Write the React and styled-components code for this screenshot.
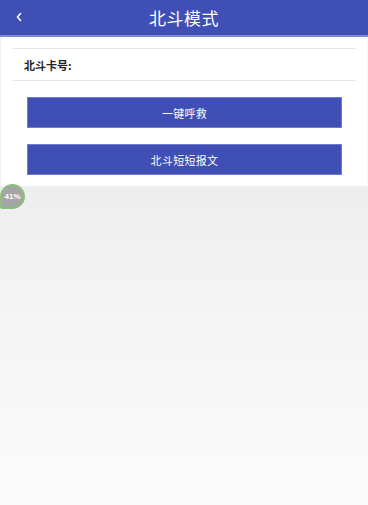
import React from "react";
import styled, { createGlobalStyle } from "styled-components";

const Global = createGlobalStyle`
  html, body { margin: 0; padding: 0; background: #ffffff; }
  body { font-family: "Noto Sans CJK SC", "Noto Sans", sans-serif; }
  * { box-sizing: border-box; }
`;

const Page = styled.div`
  width: 368px;
  height: 505px;
  display: flex;
  flex-direction: column;
  background: #ffffff;
  overflow: hidden;
`;

const Header = styled.header`
  height: 37px;
  flex-shrink: 0;
  background: #3f4fb5;
  border-bottom: 2px solid #7f8ad6;
  display: grid;
  grid-template-columns: 40px 1fr 40px;
  align-items: center;
  color: #ffffff;
`;

const Back = styled.button`
  border: none;
  background: transparent;
  color: #ffffff;
  padding: 0 0 2px 16px;
  display: flex;
  align-items: center;
  height: 100%;
`;

const Title = styled.h1`
  margin: 0;
  text-align: center;
  font-size: 17px;
  font-weight: 400;
  letter-spacing: 0.5px;
  line-height: 1;
`;

const Content = styled.main`
  padding: 11px 11px 0 12px;
  border-left: 1px solid #f0f0f0;
  border-right: 1px solid #f6f6f6;
`;

const InfoRow = styled.div`
  height: 33px;
  border-top: 1px solid #e6e6e6;
  border-bottom: 1px solid #e6e6e6;
  display: flex;
  align-items: center;
  padding-left: 11px;
  font-size: 11px;
  font-weight: 700;
  color: #222;
`;

const Actions = styled.div`
  display: flex;
  flex-direction: column;
  gap: 16px;
  padding: 16px 14px 11px 14px;
`;

const ActionButton = styled.button`
  height: 31px;
  width: 100%;
  background: #3f4fb5;
  border: 1px solid #6f7cd6;
  color: #ffffff;
  font-family: "Noto Sans CJK SC", sans-serif;
  font-size: 11px;
  letter-spacing: 0.3px;
  padding: 0;
`;

const Canvas = styled.section`
  flex: 1;
  position: relative;
  background: linear-gradient(to bottom, #eeeeee 0%, #f5f5f5 45%, #fbfbfb 100%);
`;

const Badge = styled.div`
  position: absolute;
  left: 0;
  top: -2px;
  width: 25px;
  height: 25px;
  border-radius: 50% 50% 50% 2px;
  background: #a5a5a5;
  border: 2px solid #8dbf7c;
  color: #ffffff;
  font-family: "Liberation Sans", sans-serif;
  font-size: 8px;
  font-weight: 700;
  display: flex;
  align-items: center;
  justify-content: center;
`;

export default function App() {
  return (
    <>
      <Global />
      <Page>
        <Header>
          <Back aria-label="back">
            <svg width="6" height="10" viewBox="0 0 6 10">
              <path d="M4.5 1.5 L1.5 5 L4.5 8.5" fill="none" stroke="#fff" strokeWidth="1.6" strokeLinecap="round" strokeLinejoin="round" />
            </svg>
          </Back>
          <Title>北斗模式</Title>
          <span />
        </Header>
        <Content>
          <InfoRow>北斗卡号:</InfoRow>
          <Actions>
            <ActionButton>一键呼救</ActionButton>
            <ActionButton>北斗短短报文</ActionButton>
          </Actions>
        </Content>
        <Canvas>
          <Badge>41%</Badge>
        </Canvas>
      </Page>
    </>
  );
}
